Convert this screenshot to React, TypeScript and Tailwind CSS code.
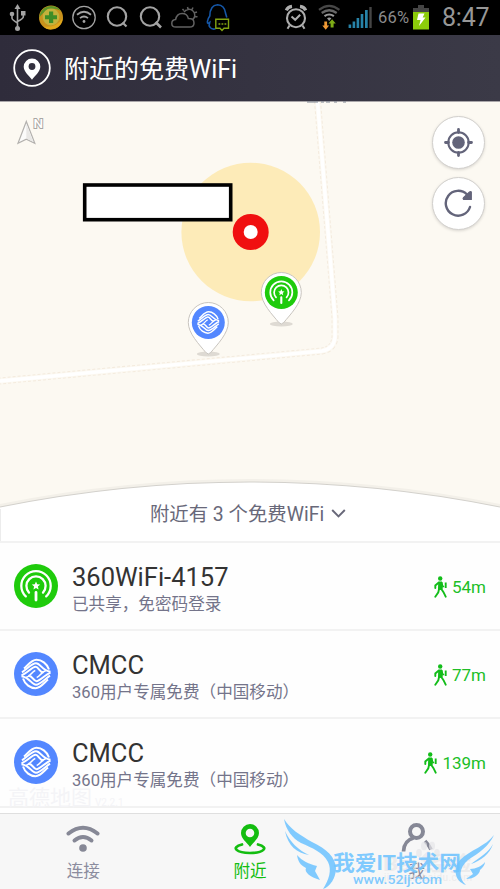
import type { ReactNode } from "react";

type Network = {
  id: number;
  kind: "share" | "cmcc";
  name: string;
  note: string;
  distance: string;
};

const networks: Network[] = [
  { id: 1, kind: "share", name: "360WiFi-4157", note: "已共享，免密码登录", distance: "54m" },
  { id: 2, kind: "cmcc", name: "CMCC", note: "360用户专属免费（中国移动）", distance: "77m" },
  { id: 3, kind: "cmcc", name: "CMCC", note: "360用户专属免费（中国移动）", distance: "139m" },
];

// Both logos are drawn in a 44 x 44 box so that rows and map pins can share them
function ShareLogo() {
  return (
    <g>
      <circle cx="22" cy="22" r="22" fill="#1fcb0c" />
      <g fill="none" stroke="#fff" strokeWidth="2.3" strokeLinecap="round">
        <path d="M11.8 32.400A14.700 14.700 0 1 1 32.200 32.400" />
        <path d="M15 28.600A9.600 9.600 0 1 1 29 28.600" />
        <path d="M22 28.500V36" strokeWidth="2.8" />
      </g>
      <path
        d="M22 17.4l1.2 2.8 3 .3-2.3 2 .7 3-2.6-1.6-2.6 1.6.7-3-2.3-2 3-.3z"
        fill="#fff"
      />
    </g>
  );
}

function CmccHalf() {
  return (
    <>
      <path d="M10 16.500C14 13 17.500 7.800 22.500 7.800S33 11.500 35 17.500" />
      <path d="M8 20.300C13 17 18 11.300 22 11.300C26.500 11.300 28 18.500 36.500 19.800" />
      <path d="M7.500 23.300C13 21 18.500 14.800 21.500 14.800C25 14.800 25 20.300 29.500 20.300" />
    </>
  );
}

function CmccLogo() {
  return (
    <g>
      <circle cx="22" cy="22" r="22" fill="#5387ff" />
      <g fill="none" stroke="#fff" strokeWidth="2">
        <CmccHalf />
        <g transform="rotate(180 22 22)">
          <CmccHalf />
        </g>
        <path d="M12 25.500C16 24.500 18.500 19.200 21.300 18.500M32 18.500C28 19.500 25.500 24.800 22.700 25.500" strokeWidth="1.600" />
      </g>
    </g>
  );
}

function Logo({ kind }: { kind: Network["kind"] }) {
  return kind === "share" ? <ShareLogo /> : <CmccLogo />;
}

function StatusBar() {
  return (
    <div className="flex h-[35px] items-center bg-black">
      <svg className="h-[35px] w-[372px] shrink-0" viewBox="0 0 372 35" fill="none">
        {/* usb */}
        <g stroke="#a3a3a3" strokeWidth="1.6">
          <path d="M17.5 7V28M12 15v3.2q0 1.5 5.5 4.8M23.3 14v3q0 1.5-5.8 4.5" />
          <path d="M17.5 4l3 5h-6z" fill="#a3a3a3" stroke="none" />
          <circle cx="17.5" cy="28.5" r="2.5" fill="#a3a3a3" stroke="none" />
          <circle cx="12" cy="14" r="2.3" fill="#a3a3a3" stroke="none" />
          <path d="M21 11h4.5v4.5H21z" fill="#a3a3a3" stroke="none" />
        </g>
        {/* 360 */}
        <circle cx="51" cy="17.5" r="12" fill="#c9921c" />
        <path d="M39.200 18A12 12 0 0 1 61 11Q54 7 48 10Q42 13 39.200 18z" fill="#5d9428" />
        <path d="M43 26.5Q57 28 62.7 18A12 12 0 0 1 43 26.5z" fill="#e0a81c" />
        <circle cx="51" cy="17" r="8.400" fill="#c2b23c" />
        <path d="M49 11.500h4.200v3.800H57v4h-3.800V23H49v-3.700h-4v-4h4z" fill="#3d8d27" />
        {/* wifi in a ring */}
        <g stroke="#a3a3a3" strokeWidth="1.8">
          <circle cx="84" cy="17.5" r="11.2" strokeWidth="1.3" />
          <path d="M77 14.7q7-5.8 14 0M80 18.1q4-3.2 8 0" />
          <circle cx="84" cy="21.5" r="1.4" fill="#a3a3a3" stroke="none" />
        </g>
        {/* search, twice */}
        <g stroke="#a3a3a3" strokeWidth="2.1">
          <circle cx="117" cy="16.5" r="9.2" />
          <path d="M122.5 22.5l4 4" />
          <circle cx="150" cy="16.5" r="9.2" />
          <path d="M155.5 22l5.5 5.5" strokeWidth="2.6" />
        </g>
        {/* weather */}
        <g stroke="#626262" strokeWidth="1.5">
          <path d="M176 27q-4.200 0-4.200-3.600 0-3.400 3.800-3.800 1-6.200 6.500-6.200 5.300 0 6.200 5 5.700-.2 5.700 4.500 0 4.100-4.500 4.100z" />
          <path d="M184 12.200a5.800 5.800 0 1 1 8.700 7.400M187.500 7l.6 2.200M193 7.500l-1.200 2.300M197 12l-2.500.8M197.500 16.800l-2.300-.4M182.500 9l1.400 1.600" />
        </g>
        {/* qq */}
        <path
          d="M210.500 27q-2-.4-1.200-2.500l.4-2q-2.600 2-2.300-.8.300-3 2.400-5.700Q210 5 217.500 4.700q7 .3 8 8.300l1.300 4.500M209.500 27q3 3 6 1.800"
          stroke="#1557a8"
          strokeWidth="1.6"
        />
        <path d="M215.800 19.200h12.700v9h-4.500l-2 2.200-2-2.200h-4.200z" stroke="#82a312" strokeWidth="1.4" />
        <path d="M218.500 24h1.800M221.500 24h1.800M224.500 24h1.800" stroke="#82a312" strokeWidth="1.500" />
        {/* alarm */}
        <g stroke="#adadad">
          <circle cx="296" cy="18.200" r="9" strokeWidth="2.100" />
          <path d="M291.500 16.500l3.700 3.300 5-5M289.500 25.500l-2 3.300M302.500 25.500l2 3.300" strokeWidth="2" />
          <path d="M286.300 10.300q1.400-3.400 5.700-3.900M305.700 10.300q-1.400-3.400-5.700-3.900" strokeWidth="3.200" />
        </g>
        {/* wifi with traffic arrows */}
        <path d="M319 9.800q10.200-8 20.400 0" stroke="#474747" strokeWidth="2.200" />
        <path d="M321.700 13q7.500-5.500 15 0" stroke="#676767" strokeWidth="2.200" />
        <path d="M324.500 16.200q4.700-3.400 9.400 0" stroke="#999" strokeWidth="2.200" />
        <path d="M327 18.200q2.200-1.200 4.400 0L329.200 21z" fill="#999" />
        <path d="M324.300 21.500h2.800v4h2l-3.400 4.300-3.400-4.300h2z" fill="#f09a35" />
        <path d="M330.600 27.500h3v-4h2.200l-3.700-4.200-3.700 4.200h2.200z" fill="#7dab16" />
        {/* signal */}
        <path
          d="M348.600 24.500h2.600V28h-2.600zM352.600 21.500h2.600V28h-2.600zM356.600 18h2.600v10h-2.600zM360.700 14h2.600v14h-2.600zM365 10h2.700v18H365z"
          fill="#2783a8"
        />
        <path d="M369.300 7h2.400v21h-2.400z" fill="#454545" />
      </svg>
      <span className="mt-[2px] ml-[6px] w-[35px] text-[16.500px] leading-none tracking-[0.2px] text-[#8b8b8b]">66%</span>
      <svg className="h-[25px] w-4 shrink-0" viewBox="0 0 16 25">
        <path d="M5 0h6v3h5v4H0V3h5z" fill="#454545" />
        <path d="M0 7h16v17.500H0z" fill="#8ccc0a" />
        <path d="M5.500 8.500h6l-1.800 4h2.800L6 21l1.500-6H4z" fill="#fff" />
      </svg>
      <span className="ml-[13px] text-[25px] leading-none tracking-[-0.200px] text-[#979797]">8:47</span>
    </div>
  );
}

function TitleBar() {
  return (
    <header className="flex h-[66px] items-center bg-linear-to-r from-[#2f2c3b] to-[#3b3a47] pl-[13px]">
      <svg className="size-[38px]" viewBox="0 0 38 38">
        <circle cx="19" cy="19" r="17.800" fill="none" stroke="#fff" strokeWidth="1.800" />
        <path
          d="M19 9.500a8.300 8.300 0 0 0-8.300 8.300c0 5 5.600 9.300 8.300 13 2.700-3.700 8.300-8 8.300-13A8.300 8.300 0 0 0 19 9.500z"
          fill="#fff"
        />
        <circle cx="19" cy="17.500" r="3.400" fill="#33313f" />
      </svg>
      <h1 className="mt-[3px] ml-[13px] text-[25px] leading-none text-white">附近的免费WiFi</h1>
    </header>
  );
}

function RoundButton({ label, children }: { label: string; children: ReactNode }) {
  return (
    <button
      aria-label={label}
      className="grid size-[53px] place-items-center rounded-full border border-[#d2d0cd] bg-white shadow-[0_1px_3px_rgba(0,0,0,0.14)]"
    >
      {children}
    </button>
  );
}

function Pin({ x, y, kind }: { x: number; y: number; kind: Network["kind"] }) {
  return (
    <g transform={`translate(${x} ${y})`}>
      <ellipse cx="0" cy="31.500" rx="11.500" ry="2.600" fill="#dedad3" />
      <path
        d="M0-20A20 20 0 0 0-20 0C-20 11-9 22-2.500 30Q0 33 2.500 30C9 22 20 11 20 0A20 20 0 0 0 0-20z"
        fill="#fff"
        stroke="#c9c5bf"
        strokeWidth="1"
      />
      <g transform="translate(-16.500 -16.500) scale(.75)">
        <Logo kind={kind} />
      </g>
    </g>
  );
}

const road = "M317.500 101L335 318V337Q334 349 322 351L0 381";

function MapView() {
  return (
    <section className="relative h-[440px] bg-[#fcf9f2]">
      <svg className="block h-[440px] w-[500px]" viewBox="0 101 500 440">
        {/* road */}
        <path d={road} fill="none" stroke="#f4ebde" strokeWidth="7" strokeDasharray="3 2" />
        <path d={road} fill="none" stroke="#fcf9f2" strokeWidth="5" />
        <path d={road} fill="none" stroke="#fff" strokeWidth="3.400" />

        <path d="M0 101.500H500" stroke="#aaa7aa" strokeWidth="1" />
        <path d="M307 102h11M321 102h3M326 102h4M334 102h3M343 102h3" stroke="#7c8390" strokeWidth="1.200" />

        {/* current position */}
        <circle cx="250.700" cy="232" r="69.300" fill="#fdebb8" />
        <rect x="84.700" y="185" width="146" height="34.700" fill="#fff" stroke="#000" strokeWidth="3.600" />
        <circle cx="250.700" cy="232" r="18" fill="#f01010" />
        <circle cx="250.700" cy="232" r="7" fill="#fff" />

        <Pin x={281.300} y={292.500} kind="share" />
        <Pin x={208.300} y={322.500} kind="cmcc" />

        {/* compass */}
        <path d="M26.300 121.500L18 143.300l8.300-4.200 8.500 4.200z" fill="#fbfbfa" stroke="#b3b1ae" strokeWidth="1.200" />
        <path d="M26.300 124v14.500l7 3.300z" fill="#e9e8e6" />
        <text
          x="33.500"
          y="128.300"
          fontSize="13.500"
          fontWeight="500"
          fill="#fff"
          stroke="#a9a7a4"
          strokeWidth="2"
          paintOrder="stroke"
        >
          N
        </text>

        {/* curved top edge of the sheet */}
        <path d="M0 506Q125 481 250 481T500 506" fill="none" stroke="#f3f0e9" strokeWidth="4" />
        <path d="M0 507Q125 482 250 482T500 507V541H0z" fill="#fff" />
        <path d="M0 507Q125 482 250 482T500 507" fill="none" stroke="#d3d1cc" strokeWidth="1.200" />
        <path d="M.5 509V541" stroke="#ececec" />
      </svg>

      <div className="absolute top-[15px] right-[15px] flex flex-col gap-[8px]">
        <RoundButton label="定位">
          <svg className="size-[30px]" viewBox="0 0 30 30" fill="none" stroke="#63647a">
            <circle cx="14.500" cy="14.500" r="10.200" strokeWidth="2" />
            <circle cx="14.500" cy="14.500" r="6.300" fill="#63647a" stroke="none" />
            <path d="M14.500 1.500v3M14.500 24.500v3M1.500 14.500h3M24.500 14.500h3" strokeWidth="2.800" strokeLinecap="round" />
          </svg>
        </RoundButton>
        <RoundButton label="刷新">
          <svg className="size-[30px]" viewBox="0 0 30 30" fill="none">
            <path
              d="M23 5.500A12.400 12.400 0 1 0 26 18"
              stroke="#63647a"
              strokeWidth="2.400"
              strokeLinecap="round"
            />
            <path d="M27.300 3v7.300h-7.800q-.8-.8 0-1.600l6-5.700q1.100-.8 1.800 0z" fill="#63647a" stroke="#63647a" strokeWidth="1.200" />
          </svg>
        </RoundButton>
      </div>

      <div className="absolute inset-x-0 bottom-0 flex h-[55px] items-center justify-center gap-[7px] pr-[4px] text-[#686879]">
        <span className="mt-[2px] whitespace-pre text-[19.400px] leading-none">附近有 3 个免费WiFi</span>
        <svg className="h-[9px] w-[15px]" viewBox="0 0 15 9" fill="none">
          <path d="M1.200 1l6.300 6.500L13.800 1" stroke="#686879" strokeWidth="1.900" />
        </svg>
      </div>
    </section>
  );
}

function Walker() {
  return (
    <svg className="h-[22px] w-[13px]" viewBox="0 0 13 22" fill="none" stroke="#13bd1a">
      <circle cx="6.200" cy="2.500" r="2.200" fill="#13bd1a" stroke="none" />
      <path d="M4.800 6h3.200l.6 3-.6 4.300-3.500.2z" fill="#13bd1a" strokeWidth="1" />
      <path
        d="M4.800 6.500L1.300 9.500v2.500M5 13.300L4.300 16.300 1.300 20.700M7.500 13.300l2 2.900 2.200 4.500"
        strokeWidth="1.900"
        strokeLinecap="round"
      />
      <path d="M8.500 9.500l1.500 1.500" strokeWidth="1.300" />
      <path d="M11.700 6.500v5.500" strokeWidth="1.900" />
    </svg>
  );
}

function NetworkRow({ network }: { network: Network }) {
  return (
    <li className="flex h-[88.200px] items-center border-t-2 border-[#f2f2f2] bg-[#fefefe] pr-[14px] pl-[14px]">
      <svg className="size-[44px] shrink-0" viewBox="0 0 44 44">
        <Logo kind={network.kind} />
      </svg>
      <div className="mt-[6px] ml-[14px] flex-1">
        <p className="text-[25.500px] leading-[30px] text-[#333]">{network.name}</p>
        <p className="text-[16.600px] leading-[25px] text-[#74748a]">{network.note}</p>
      </div>
      <div className="mt-[1px] flex items-center gap-[5px] text-[17px] text-[#20be27]">
        <Walker />
        <span className="mt-[1px] leading-none">{network.distance}</span>
      </div>
    </li>
  );
}

function Tab({ label, active = false, children }: { label: string; active?: boolean; children: ReactNode }) {
  return (
    <button className={`flex flex-1 flex-col items-center pt-[9px] ${active ? "text-[#13bd10]" : "text-[#8b8c9e]"}`}>
      <svg className="h-[32px] w-[36px]" viewBox="0 0 36 32" fill="none">
        {children}
      </svg>
      <span className="mt-[5px] text-[16.600px] leading-[24px]">{label}</span>
    </button>
  );
}

function Watermark() {
  return (
    <svg className="pointer-events-none absolute top-0 right-0 h-[81px] w-[230px]" viewBox="270 808 230 81">
      <g fill="#e6e6e8" fillOpacity=".7">
        <ellipse cx="419" cy="847" rx="2.800" ry="4" />
        <ellipse cx="424" cy="840" rx="3" ry="4.200" />
        <ellipse cx="432" cy="840" rx="3" ry="4.200" />
        <ellipse cx="437" cy="847" rx="2.800" ry="4" />
        <path d="M428 845q4 3 7 7t-7 4-7-4 7-7z" />
        <text x="383" y="865" fontSize="20" fontWeight="700" textLength="88" lengthAdjust="spacingAndGlyphs">
          Bai 经验
        </text>
        <text x="384" y="875" fontSize="10" textLength="88">
          jingyan.baidu.com
        </text>
      </g>
      <g fill="#6fc4ff" fillOpacity=".88">
        <path d="M284 813C290 823 300 829 312 836C327 843 335 851 336 862C336 872 330 881 323 883C329 874 332 864 328 856C323 846 312 842 301 837C292 832 286 824 284 813z" />
        <path d="M285 825C290 836 298 844 309 849C297 847 288 840 285 825z" />
        <path d="M297 849C302 855 309 858 317 860L315 865L320 874C310 871 304 866 306 862C300 859 298 855 297 849z" />
        <path d="M494 829C489 840 479 847 468 854C459 862 458 872 466 879C454 875 453 862 460 854C470 844 486 840 494 829z" />
        <path d="M493 838C490 848 480 855 471 858C480 851 488 847 493 838z" />
        <path d="M485 856C482 860 476 863 470 863L473 868L466 873C474 873 480 868 480 864C483 861 485 859 485 856z" />
        <text x="333" y="864" fontSize="21" fontWeight="700" textLength="128" lengthAdjust="spacingAndGlyphs">
          我爱IT技术网
        </text>
        <text x="353" y="878" fontSize="12" fontWeight="500" textLength="89" lengthAdjust="spacingAndGlyphs">
          www.52ij.com
        </text>
      </g>
    </svg>
  );
}

function TabBar() {
  return (
    <nav className="relative flex h-[76px] border-t border-[#dfdfdf] bg-[#f7f7f7]">
      <Tab label="连接">
        <g stroke="#868896" strokeWidth="4" strokeLinecap="round">
          <path d="M3.500 10.500Q18-1 32.500 10.500" />
          <path d="M9.500 17.500Q18 10.500 26.500 17.500" />
        </g>
        <circle cx="18" cy="25" r="3.800" fill="#868896" />
      </Tab>
      <Tab label="附近" active>
        <path
          d="M18 1a9 9 0 0 0-9 9c0 5.500 6 9.500 9 14 3-4.500 9-8.500 9-14a9 9 0 0 0-9-9zm0 4.700a4.300 4.300 0 1 1 0 8.600 4.300 4.300 0 0 1 0-8.600z"
          fill="#13bd10"
          fillRule="evenodd"
        />
        <path
          d="M10 21.500C-2 24.500 5 30 18 30S38 24.500 26 21.500"
          stroke="#13bd10"
          strokeWidth="2.700"
          strokeLinecap="round"
        />
      </Tab>
      <Tab label="我">
        <circle cx="17.500" cy="8.500" r="6.500" stroke="#868896" strokeWidth="4" />
        <path d="M4.500 28.500Q5 17.500 14.500 15M26 18q4 4 6 8.500" stroke="#868896" strokeWidth="3.700" />
      </Tab>
      <Watermark />
    </nav>
  );
}

export default function App() {
  return (
    <main className="flex h-[889px] w-[500px] flex-col overflow-hidden bg-white font-['Roboto','Noto_Sans_CJK_SC',sans-serif]">
      <StatusBar />
      <TitleBar />
      <MapView />
      <div className="relative h-[272px]">
        <ul className="border-b-2 border-[#f2f2f2]">
          {networks.map((network) => (
            <NetworkRow key={network.id} network={network} />
          ))}
        </ul>
        <p className="absolute bottom-[4px] left-[8px] flex items-end text-[#f4f4f7]">
          <span className="text-[21px] leading-[21px]">高德地图</span>
          <span className="ml-[3px] text-[10px] leading-[12px]">V2.2.1</span>
        </p>
      </div>
      <TabBar />
    </main>
  );
}
